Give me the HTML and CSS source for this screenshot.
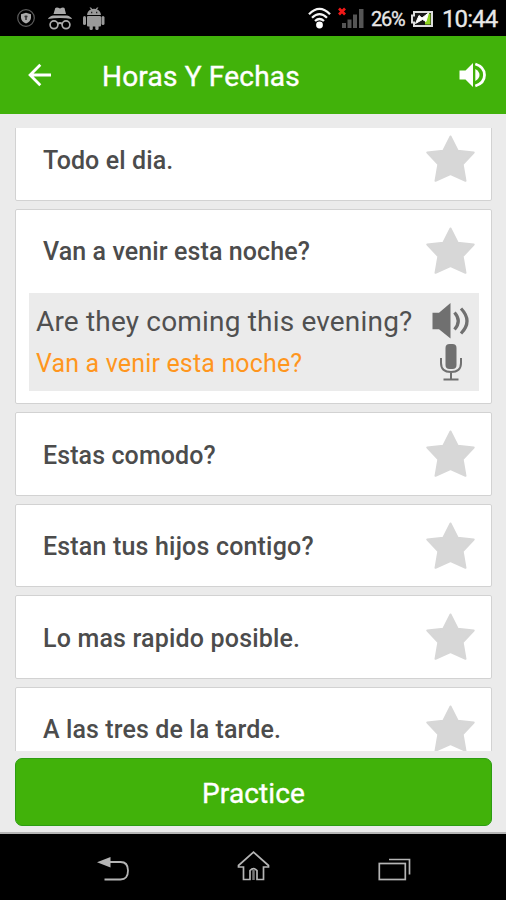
FILE: index.html
```html
<!DOCTYPE html>
<html lang="es">
<head>
<meta charset="utf-8">
<title>Horas Y Fechas</title>
<link rel="stylesheet" href="styles.css">
</head>
<body>
<svg class="defs" aria-hidden="true">
  <symbol id="star" viewBox="0 0 50 48"><path d="M24.500 1.500 31.700 15.800 47.700 17.600 36.700 29.300 39.500 45.800 24.500 39 9.500 45.800 12.300 29.300 1.300 17.600 17.300 15.800Z" fill="#d7d7d7" stroke="#d7d7d7" stroke-width="2" stroke-linejoin="round"/></symbol>
</svg>
<div class="phone">
  <div class="status">
    <svg class="notices" viewBox="0 0 110 36">
      <circle cx="26" cy="18" r="8.3" fill="none" stroke="#5c5c5c" stroke-width="1.2"/>
      <path d="M26 12.8 31 14.3V18Q30.5 21.5 26 23.5 21.5 21.5 21 18V14.3Z" fill="#aaa"/>
      <path d="M26 15.5V20M24.5 16.5H27.5" stroke="#333" stroke-width="1.5"/>
      <path d="M53.5 14 55.300 8Q57 6.800 60 8.500 63 6.800 64.500 8L66 14Z" fill="#aaa"/>
      <path d="M48 19Q49 16.500 53 15.500H67Q71 16.500 72 19Q60 17 48 19Z" fill="#aaa"/>
      <g fill="none" stroke="#aaa" stroke-width="1.7"><circle cx="54" cy="24.8" r="3.9"/><circle cx="66" cy="24.8" r="3.9"/><path d="M57.5 24Q60 22 62.5 24"/></g>
      <g fill="#9a9a9a"><path d="M87 15Q87.5 10.5 91 9.5L89.5 7.5H91L92.3 9Q94 8.6 95.7 9L97 7.5H98.5L97 9.5Q100.5 10.5 101 15Z"/><rect x="87" y="16" width="14" height="10.5" rx="1"/><rect x="83" y="16" width="3" height="9" rx="1.5"/><rect x="101.5" y="16" width="3" height="9" rx="1.5"/><rect x="89.5" y="24" width="3.3" height="6" rx="1.5"/><rect x="95.3" y="24" width="3.3" height="6" rx="1.5"/></g>
      <path d="M91 12.5H92.3M96 12.5H97.3" stroke="#222" stroke-width="1.3"/>
    </svg>
    <svg class="signal" viewBox="0 0 62 36">
      <g fill="none" stroke="#f4f4f4" stroke-width="2.3"><path d="M2 14.2Q12.5 3.5 23 14.2"/><path d="M5 17.8Q12.5 10.5 20 17.8"/><path d="M8 21Q12.5 17 17 21"/></g>
      <circle cx="12.5" cy="25" r="3.4" fill="#fff"/>
      <path d="M32 8.5 38 14.5M38 8.5 32 14.5" stroke="#f01818" stroke-width="2.7"/>
      <g fill="#555"><rect x="35" y="23" width="4" height="5"/><rect x="40.5" y="19.5" width="4" height="8.5"/><rect x="46" y="14.5" width="4" height="13.5"/><rect x="52" y="9" width="4.5" height="19"/></g>
    </svg>
    <span class="percent">26%</span>
    <svg class="battery" viewBox="0 0 24 36">
      <path d="M4 12H22V26H4V22.5H2V15.5H4Z" fill="#181818" stroke="#ddd" stroke-width="2"/>
      <path d="M15 24.500V19L18 13.5H20.500V24.500Z" fill="#8ed321"/>
      <path d="M5.5 23.5 9 15.5 12 18 18.5 13 16 21.5 12.5 19.5Z" fill="#fff" stroke="#fff"/>
    </svg>
    <span class="clock">10:44</span>
  </div>
  <header class="appbar">
    <svg class="back" viewBox="0 0 24 24"><path d="M23 12H2.5M12.3 1.8 2.1 12 12.3 22.2" fill="none" stroke="#fff" stroke-width="2.8"/></svg>
    <h1 class="title">Horas Y Fechas</h1>
    <svg class="sound" viewBox="0 0 28 26"><path d="M.5 8.500H6.500L14 1V25L6.500 17.500H.5Z" fill="#fff"/><path d="M16.300 7Q20.500 9.500 20.500 13 20.500 16.500 16.300 19Z" fill="#fff"/><path d="M16.300 2Q25.500 5 25.500 13 25.500 21 16.300 24" fill="none" stroke="#fff" stroke-width="2.8"/></svg>
  </header>
  <main class="content">
    <div class="list">
      <section class="card"><div class="row"><span class="phrase">Todo el dia.</span><svg class="star"><use href="#star"/></svg></div></section>
      <section class="card"><div class="row"><span class="phrase">Van a venir esta noche?</span><svg class="star"><use href="#star"/></svg></div>
        <div class="detail">
          <div class="texts"><p class="english">Are they coming this evening?</p><p class="spanish">Van a venir esta noche?</p></div>
          <div class="tools">
            <svg class="speaker" viewBox="0 0 38 36"><path d="M.5 9.800H7L18.500 0V35.500L7 26.200H.5Z" fill="#707070"/><path d="M22.500 9.500Q30 18 22.500 26.500M29 5.500Q41 18 29 30.500" fill="none" stroke="#707070" stroke-width="3.2"/></svg>
            <svg class="mic" viewBox="0 0 24 38"><rect x="6.5" y="0" width="11" height="25" rx="4" fill="#707070"/><path d="M2 14V19Q2 28 12 28 22 28 22 19V14M12 28V35.500M4.500 35.500H19.500" fill="none" stroke="#707070" stroke-width="2"/></svg>
          </div>
        </div>
      </section>
      <section class="card"><div class="row"><span class="phrase">Estas comodo?</span><svg class="star"><use href="#star"/></svg></div></section>
      <section class="card"><div class="row"><span class="phrase wide">Estan tus hijos contigo?</span><svg class="star"><use href="#star"/></svg></div></section>
      <section class="card"><div class="row"><span class="phrase wide">Lo mas rapido posible.</span><svg class="star"><use href="#star"/></svg></div></section>
      <section class="card"><div class="row"><span class="phrase">A las tres de la tarde.</span><svg class="star"><use href="#star"/></svg></div></section>
    </div>
    <button class="practice">Practice</button>
  </main>
  <nav class="navbar">
    <svg viewBox="0 0 34 34"><path d="M12 10H23.500Q31 10 31 18.500 31 27.500 23.500 27.500H7.500" fill="none" stroke="#b5b5b5" stroke-width="1.8"/><path d="M0 10.200 13.500 5V15.500Z" fill="#b5b5b5"/></svg>
    <svg viewBox="0 0 34 34"><path d="M15.500 .2 30.500 13.500V15H25.500V27.500H19V18.500Q15.500 15 12 18.500V27.500H5.500V15H.5V13.500Z" fill="none" stroke="#b5b5b5" stroke-width="1.7"/><path d="M15.500 18V28" stroke="#777" stroke-width="2.500"/></svg>
    <svg viewBox="0 0 34 34"><rect x="1.300" y="11.500" width="26" height="16" fill="none" stroke="#b5b5b5" stroke-width="1.7"/><path d="M11 7.500H31.500V22.500" fill="none" stroke="#b5b5b5" stroke-width="1.7"/></svg>
  </nav>
</div>
</body>
</html>
```
FILE: styles.css
```css
* { box-sizing: border-box; }
body { margin: 0; background: #000; font-family: Roboto, "Liberation Sans", sans-serif; }
.defs { position: absolute; width: 0; height: 0; }
svg { display: block; flex: none; overflow: visible; }
.phone { width: 506px; height: 900px; display: flex; flex-direction: column; overflow: hidden; }
.status { height: 36px; display: flex; align-items: center; background: #000; color: #e8e8e8; }
.notices { width: 110px; height: 36px; margin-right: 197px; }
.signal { width: 62px; height: 36px; }
.percent { width: 39px; margin-left: 2px; padding-top: 2px; font-size: 20px; letter-spacing: -1.2px; line-height: 36px; white-space: nowrap; -webkit-text-stroke: 0.3px #e8e8e8; }
.battery { width: 24px; height: 36px; margin-right: 8px; }
.clock { padding-top: 1px; font-size: 24px; letter-spacing: -0.9px; line-height: 36px; white-space: nowrap; -webkit-text-stroke: 0.3px #e8e8e8; }
.appbar { height: 78px; display: flex; align-items: center; padding: 0 19px 0 28px; background: #41b20a; color: #fff; }
.back { width: 24px; height: 24px; }
.title { margin: 0 auto 0 50px; padding-top: 3px; font-size: 28px; font-weight: 400; letter-spacing: 0.2px; line-height: 34px; white-space: nowrap; -webkit-text-stroke: 0.4px #fff; }
.sound { width: 28px; height: 26px; }
.content { height: 720px; padding: 14px 14px 0 15px; background: #ebebeb; border-bottom: 2px solid #b5b5b5; }
.list { height: 623px; overflow: hidden; }
.card { height: 83.5px; margin-bottom: 8px; background: #fff; border: 1px solid #d2d2d2; border-radius: 2px; }
.card:first-child { margin-top: -11px; }
.card:nth-child(2) { height: 195.5px; }
.row { height: 82px; display: flex; align-items: center; justify-content: space-between; padding: 0 15px 0 27px; }
.phrase { padding-top: 2px; font-size: 25px; font-weight: 500; letter-spacing: 0.1px; color: #4c4c4c; white-space: nowrap; }
.wide { letter-spacing: 0.18px; }
.star { width: 50px; height: 48px; }
.detail { height: 98px; margin: 1px 12px 0 13px; display: flex; justify-content: space-between; background: #ebebeb; padding: 10px 9px 0 7px; }
.texts p { margin: 0; white-space: nowrap; }
.english { font-size: 28px; letter-spacing: 0.18px; line-height: 38px; color: #505050; }
.spanish { font-size: 25px; letter-spacing: 0.16px; line-height: 46px; color: #ff961e; }
.tools { display: flex; flex-direction: column; align-items: center; gap: 5px; }
.speaker { width: 38px; height: 36px; }
.mic { width: 24px; height: 38px; }
.practice { display: block; width: 477px; height: 68px; margin-top: 7px; padding: 3px 0 0; border: 1px solid #2d9d12; border-radius: 7px; background: #41b20a; color: #fff; font: 400 28px Roboto, "Liberation Sans", sans-serif; letter-spacing: 0.1px; -webkit-text-stroke: 0.4px #fff; }
.navbar { height: 66px; display: flex; justify-content: space-between; padding: 18px 94px 0 97px; background: #000; }
.navbar svg { width: 34px; height: 34px; }
```
